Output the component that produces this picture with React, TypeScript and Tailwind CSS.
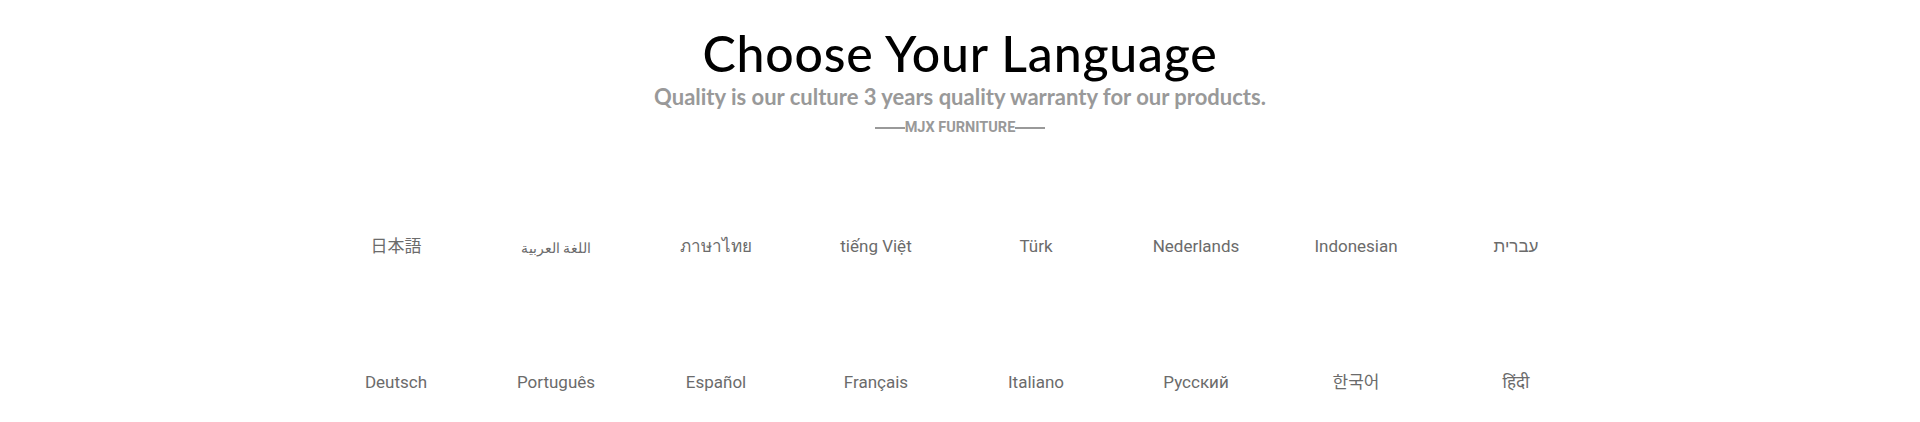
import React from "react";

const row1 = ["日本語", "اللغة العربية", "ภาษาไทย", "tiếng Việt", "Türk", "Nederlands", "Indonesian", "עברית"];
const row2 = ["Deutsch", "Português", "Español", "Français", "Italiano", "Русский", "한국어", "हिंदी"];

function Item({ label }: { label: string }) {
  const isArabic = label === "اللغة العربية";
  return (
    <div className={`h-[24px] flex items-center justify-center text-[#6b6b6b] ${isArabic ? "text-[14px] pt-[2px]" : "text-[17px]"}`}>
      {label}
    </div>
  );
}

export default function App() {
  return (
    <div className="w-[1920px] h-[422px] bg-white overflow-hidden">
      <div className="flex flex-col items-center pt-[25px]">
        <h1 className="text-[50px] leading-[56px] text-black font-medium tracking-[0.8px]" style={{ fontFamily: "Lato, 'Noto Sans', sans-serif" }}>
          Choose Your Language
        </h1>
        <p className="text-[22px] leading-[26px] font-bold text-[#999999] mt-[3px]" style={{ fontFamily: "Lato, 'Noto Sans', sans-serif" }}>
          Quality is our culture 3 years quality warranty for our products.
        </p>
        <div className="flex items-center mt-[8px] text-[#999999]">
          <span className="w-[30px] h-[2px] bg-[#999999]" />
          <span className="text-[14.5px] leading-[20px] font-bold" style={{ fontFamily: "'Liberation Sans Narrow', 'Roboto', sans-serif" }}>
            MJX FURNITURE
          </span>
          <span className="w-[30px] h-[2px] bg-[#999999]" />
        </div>
      </div>
      <div className="w-[1288px] pr-[8px] mx-auto mt-[97px]">
        <div className="grid grid-cols-8" style={{ fontFamily: "Roboto, 'Noto Sans CJK JP', 'Noto Sans', sans-serif" }}>
          {row1.map((l) => (
            <Item key={l} label={l} />
          ))}
        </div>
        <div className="grid grid-cols-8 mt-[112px]" style={{ fontFamily: "Roboto, 'Noto Sans CJK KR', 'Noto Sans', sans-serif" }}>
          {row2.map((l) => (
            <Item key={l} label={l} />
          ))}
        </div>
      </div>
    </div>
  );
}
